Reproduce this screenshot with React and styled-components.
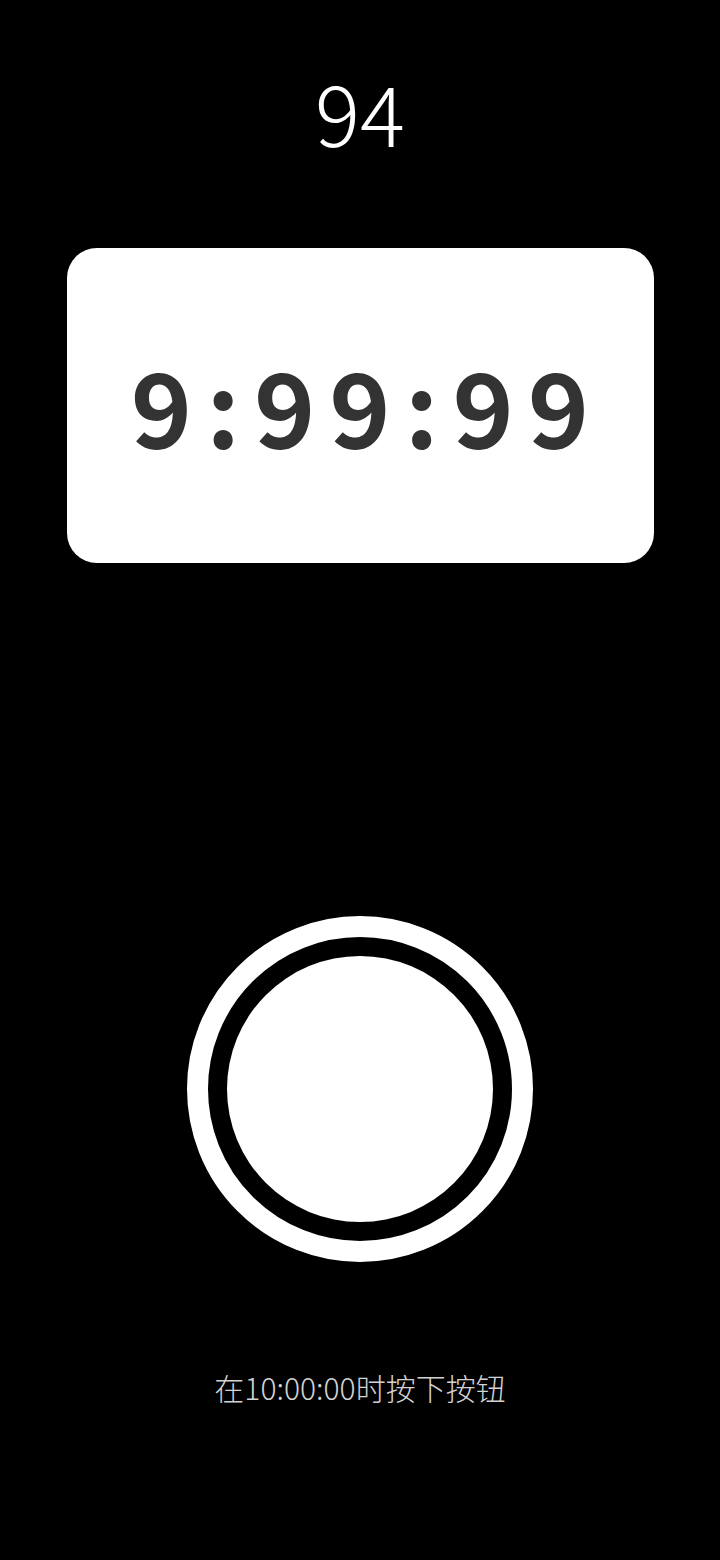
import React from "react";
import styled, { createGlobalStyle } from "styled-components";

const GlobalStyle = createGlobalStyle`
  html, body {
    margin: 0;
    padding: 0;
    background: #000;
  }
  body {
    font-family: "Noto Sans CJK SC", "Noto Sans", sans-serif;
  }
`;

const Screen = styled.div`
  width: 720px;
  height: 1560px;
  background: #000;
  display: flex;
  flex-direction: column;
  align-items: center;
  box-sizing: border-box;
  padding-top: 64px;
`;

const Score = styled.div`
  color: #fff;
  font-family: "Noto Sans CJK SC", "Noto Sans", sans-serif;
  font-weight: 300;
  font-size: 84px;
  line-height: 94px;
  height: 94px;
`;

const Card = styled.div`
  margin-top: 90px;
  width: 587px;
  height: 315px;
  background: #fff;
  border-radius: 30px;
  display: flex;
  align-items: center;
  justify-content: center;
`;

const Clock = styled.div`
  color: #333;
  font-family: "Noto Sans CJK SC", "Noto Sans", sans-serif;
  font-weight: 700;
  font-size: 104px;
  line-height: 1;
  letter-spacing: 14px;
  font-variant-numeric: tabular-nums;
  padding-bottom: 4px;
  padding-left: 14px;
`;

const PressButton = styled.button`
  margin-top: 353px;
  width: 346px;
  height: 346px;
  box-sizing: border-box;
  border-radius: 50%;
  border: 21px solid #fff;
  padding: 19px;
  background: #000;
  cursor: pointer;
  display: flex;
`;

const Disk = styled.span`
  flex: 1;
  border-radius: 50%;
  background: #fff;
`;

const Hint = styled.div`
  margin-top: 108px;
  color: #d2d2d2;
  font-family: "Noto Sans CJK SC", "Noto Sans", sans-serif;
  font-weight: 300;
  font-size: 30px;
  line-height: 34px;
`;

const App = () => {
  return (
    <>
      <GlobalStyle />
      <Screen>
        <Score>94</Score>
        <Card>
          <Clock>9:99:99</Clock>
        </Card>
        <PressButton aria-label="按钮">
          <Disk />
        </PressButton>
        <Hint>在10:00:00时按下按钮</Hint>
      </Screen>
    </>
  );
};

export default App;
